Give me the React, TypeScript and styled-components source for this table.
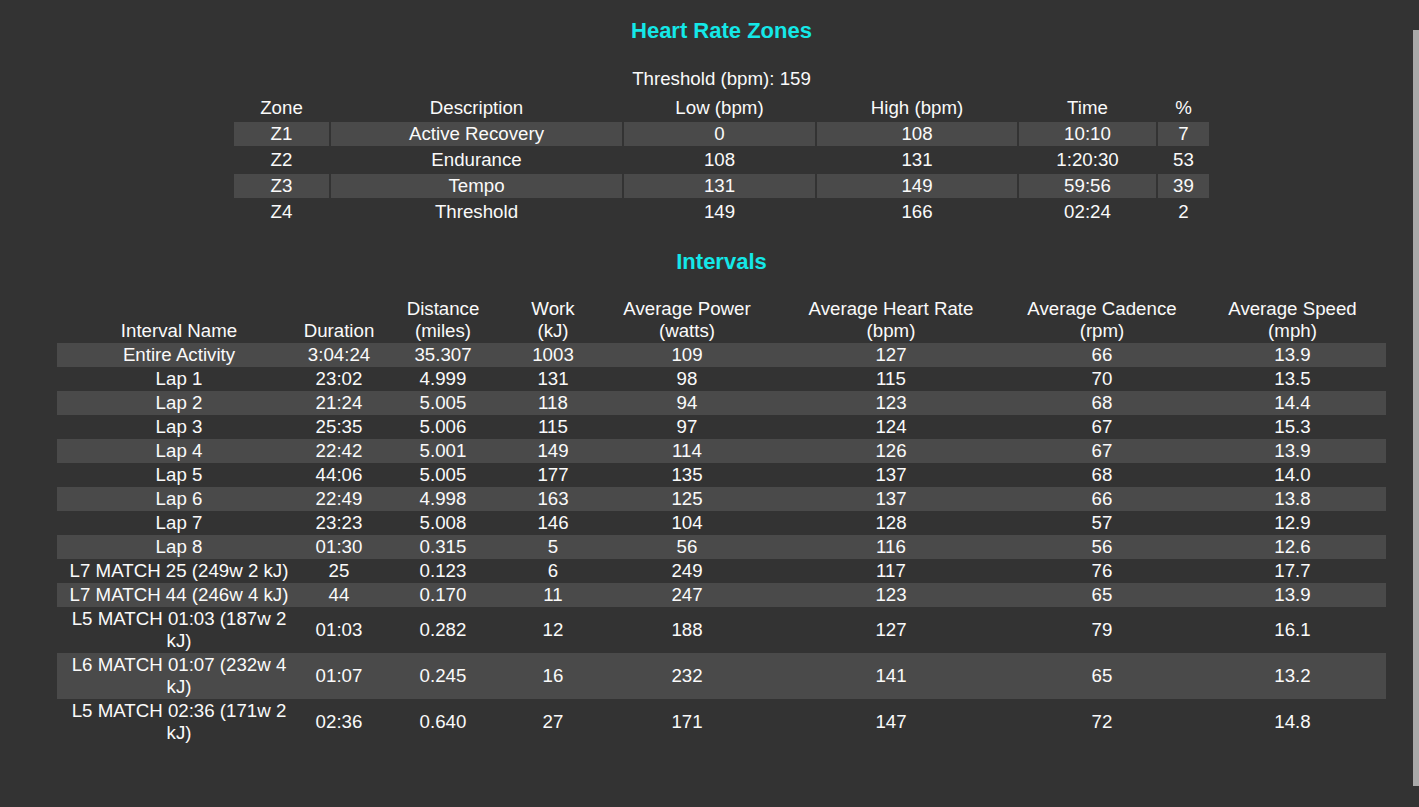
import React from "react";
import styled, { createGlobalStyle } from "styled-components";

const GlobalStyle = createGlobalStyle`
  html, body {
    margin: 0;
    padding: 0;
    background: #333333;
    overflow: hidden;
  }
  body {
    font-family: "Liberation Sans", Arial, sans-serif;
    color: #fafafa;
  }
`;

const Page = styled.main`
  box-sizing: border-box;
  width: 1419px;
  min-height: 807px;
  padding: 18px 0 0 24px;
  text-align: center;
  font-size: 18.7px;
  line-height: 22px;
`;

const SectionTitle = styled.h3<{ $gap: number }>`
  margin: ${(p) => p.$gap}px 0 0;
  font-size: 22px;
  line-height: 26px;
  font-weight: bold;
  color: #14e8e8;
`;

const ThresholdLine = styled.div`
  margin-top: 24px;
  line-height: 22px;
`;

const ZonesTable = styled.table`
  margin: 4px auto 0;
  width: 979px;
  table-layout: fixed;
  border-collapse: separate;
  border-spacing: 2px;
  font-size: inherit;
`;

const IntervalsTable = styled.table`
  margin: 22px auto 0;
  width: 1329px;
  table-layout: fixed;
  border-collapse: collapse;
  border-spacing: 0;
  font-size: inherit;
`;

const HeadCell = styled.th`
  padding: 1px;
  font-weight: normal;
  text-align: center;
  vertical-align: bottom;
  line-height: 22px;
`;

const Row = styled.tr<{ $striped: boolean }>`
  background: ${(p) => (p.$striped ? "#4a4a4a" : "transparent")};
`;

const ZoneRow = styled.tr<{ $striped: boolean }>`
  & > td {
    background: ${(p) => (p.$striped ? "#4a4a4a" : "transparent")};
  }
`;

const Cell = styled.td`
  padding: 1px;
  text-align: center;
  vertical-align: middle;
  line-height: 22px;
`;

const Scrollbar = styled.div`
  position: fixed;
  top: 30px;
  right: 0;
  width: 6px;
  height: 756px;
  background: #a9a9a9;
`;

const zoneCols = [95, 291, 191, 200, 137, 51];
const zoneHead = ["Zone", "Description", "Low (bpm)", "High (bpm)", "Time", "%"];
const zones = [
  ["Z1", "Active Recovery", "0", "108", "10:10", "7"],
  ["Z2", "Endurance", "108", "131", "1:20:30", "53"],
  ["Z3", "Tempo", "131", "149", "59:56", "39"],
  ["Z4", "Threshold", "149", "166", "02:24", "2"],
];

const intCols = [244, 76, 132, 88, 180, 228, 194, 187];
const intHead: [string, string?][] = [
  ["Interval Name"],
  ["Duration"],
  ["Distance", "(miles)"],
  ["Work", "(kJ)"],
  ["Average Power", "(watts)"],
  ["Average Heart Rate", "(bpm)"],
  ["Average Cadence", "(rpm)"],
  ["Average Speed", "(mph)"],
];
const intervals = [
  ["Entire Activity", "3:04:24", "35.307", "1003", "109", "127", "66", "13.9"],
  ["Lap 1", "23:02", "4.999", "131", "98", "115", "70", "13.5"],
  ["Lap 2", "21:24", "5.005", "118", "94", "123", "68", "14.4"],
  ["Lap 3", "25:35", "5.006", "115", "97", "124", "67", "15.3"],
  ["Lap 4", "22:42", "5.001", "149", "114", "126", "67", "13.9"],
  ["Lap 5", "44:06", "5.005", "177", "135", "137", "68", "14.0"],
  ["Lap 6", "22:49", "4.998", "163", "125", "137", "66", "13.8"],
  ["Lap 7", "23:23", "5.008", "146", "104", "128", "57", "12.9"],
  ["Lap 8", "01:30", "0.315", "5", "56", "116", "56", "12.6"],
  ["L7 MATCH 25 (249w 2 kJ)", "25", "0.123", "6", "249", "117", "76", "17.7"],
  ["L7 MATCH 44 (246w 4 kJ)", "44", "0.170", "11", "247", "123", "65", "13.9"],
  ["L5 MATCH 01:03 (187w 2 kJ)", "01:03", "0.282", "12", "188", "127", "79", "16.1"],
  ["L6 MATCH 01:07 (232w 4 kJ)", "01:07", "0.245", "16", "232", "141", "65", "13.2"],
  ["L5 MATCH 02:36 (171w 2 kJ)", "02:36", "0.640", "27", "171", "147", "72", "14.8"],
];

export default function App() {
  return (
    <>
      <GlobalStyle />
      <Page>
        <SectionTitle $gap={0}>Heart Rate Zones</SectionTitle>
        <ThresholdLine>Threshold (bpm): 159</ThresholdLine>
        <ZonesTable>
          <colgroup>
            {zoneCols.map((w, i) => (
              <col key={i} style={{ width: w }} />
            ))}
          </colgroup>
          <thead>
            <tr>
              {zoneHead.map((h) => (
                <HeadCell key={h}>{h}</HeadCell>
              ))}
            </tr>
          </thead>
          <tbody>
            {zones.map((r, i) => (
              <ZoneRow key={r[0]} $striped={i % 2 === 0}>
                {r.map((c, j) => (
                  <Cell key={j}>{c}</Cell>
                ))}
              </ZoneRow>
            ))}
          </tbody>
        </ZonesTable>

        <SectionTitle $gap={23}>Intervals</SectionTitle>
        <IntervalsTable>
          <colgroup>
            {intCols.map((w, i) => (
              <col key={i} style={{ width: w }} />
            ))}
          </colgroup>
          <thead>
            <tr>
              {intHead.map(([a, b]) => (
                <HeadCell key={a}>
                  {a}
                  {b && (
                    <>
                      <br />
                      {b}
                    </>
                  )}
                </HeadCell>
              ))}
            </tr>
          </thead>
          <tbody>
            {intervals.map((r, i) => (
              <Row key={r[0]} $striped={i % 2 === 0}>
                {r.map((c, j) => (
                  <Cell key={j}>{c}</Cell>
                ))}
              </Row>
            ))}
          </tbody>
        </IntervalsTable>
      </Page>
      <Scrollbar />
    </>
  );
}
